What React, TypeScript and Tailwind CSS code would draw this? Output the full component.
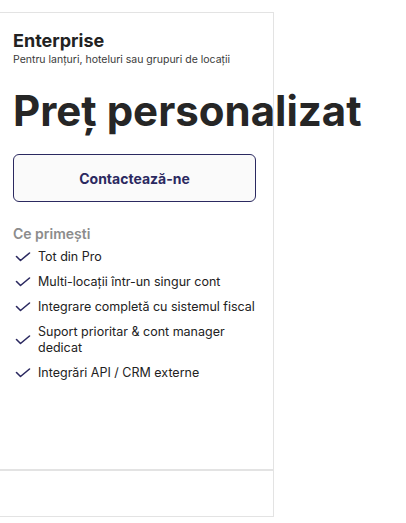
import React from "react";

const Check = () => (
  <svg width="20" height="12" viewBox="0 0 20 12" fill="none" stroke="#2b2960" strokeWidth="1.6" strokeLinecap="round" strokeLinejoin="round" className="shrink-0">
    <path d="M3.5 5.5 7.5 9.5 16.5 2" />
  </svg>
);

const items = [
  "Tot din Pro",
  "Multi-locații într-un singur cont",
  "Integrare completă cu sistemul fiscal",
  "Suport prioritar & cont manager dedicat",
  "Integrări API / CRM externe",
];

export default function App() {
  return (
    <div className="w-[406px] h-[523px] bg-white overflow-hidden pt-3" style={{ fontFamily: "Inter, 'Noto Sans', sans-serif" }}>
      <div className="ml-[-1px] w-[275px]">
        <div className="h-[458px] border border-[#e3e3e3] pl-[13px] pr-3 pt-4">
          <div className="text-[18px] leading-6 font-bold text-[#222]">Enterprise</div>
          <div className="text-[10.5px] leading-[14px] text-[#3a3a3a] whitespace-nowrap">Pentru lanțuri, hoteluri sau grupuri de locații</div>
          <div className="mt-5 text-[42px] leading-[48px] font-bold text-[#262626] whitespace-nowrap">Preț personalizat</div>
          <div className="pr-[6px]">
            <button className="mt-[19px] w-[243px] h-12 rounded-md border border-[#2b2960] bg-[#fafafa] text-[14px] font-bold text-[#2b2960]">
              Contactează-ne
            </button>
          </div>
          <div className="mt-[22px] text-[14px] leading-5 font-semibold text-[#8c8c8c]">Ce primești</div>
          <ul className="mt-[5px] flex flex-col gap-[9px]">
            {items.map((t) => (
              <li key={t} className="flex items-center gap-[5px] text-[12.5px] leading-4 text-[#222]">
                <Check />
                <span>{t}</span>
              </li>
            ))}
          </ul>
        </div>
        <div className="h-[47px] border border-[#e3e3e3]" />
      </div>
    </div>
  );
}
